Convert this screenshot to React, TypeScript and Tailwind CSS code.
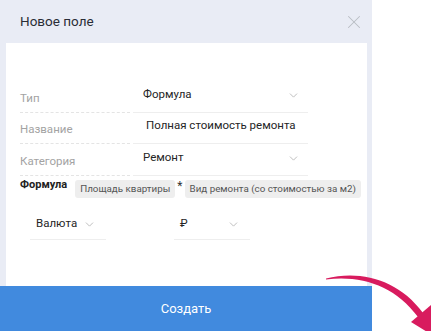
import { ChevronDown, X } from "lucide-react";

type FieldRowProps = {
  label: string;
  value: string;
  select?: boolean;
  valueIndent?: string;
};

function FieldRow({ label, value, select = false, valueIndent = "pl-[10px]" }: FieldRowProps) {
  return (
    <div className="flex h-[32px] items-end whitespace-nowrap">
      <div className="w-[110px] shrink-0 border-b border-dashed border-[#e4e4e4] pb-[5px] text-[11.5px] text-[#a3a3a3]">
        {label}
      </div>
      <div
        className={`ml-[3px] flex w-[175px] shrink-0 items-center justify-between border-b border-[#eeeeee] pb-[9px] pr-[8px] text-[11.5px] text-[#252525] ${valueIndent}`}
      >
        <span>{value}</span>
        {select ? <ChevronDown className="mt-[3px] h-[13px] w-[13px] text-[#b5b5b5]" strokeWidth={1.6} /> : null}
      </div>
    </div>
  );
}

function SmallSelect({ value }: { value: string }) {
  return (
    <div className="flex w-[76px] shrink-0 items-center justify-between whitespace-nowrap border-b border-[#eeeeee] pb-[7px] pl-[6px] pr-[10px] text-[11.5px] text-[#252525]">
      <span>{value}</span>
      <ChevronDown className="mt-[2px] h-[13px] w-[13px] text-[#b5b5b5]" strokeWidth={1.6} />
    </div>
  );
}

function Chip({ children }: { children: string }) {
  return (
    <span className="shrink-0 whitespace-nowrap rounded-[3px] bg-[#eeeeee] px-[5px] py-[2px] text-[9.8px] leading-[14px] text-[#555555]">
      {children}
    </span>
  );
}

export default function App() {
  return (
    <div className="relative flex h-[331px] w-[431px] overflow-hidden bg-white font-['Roboto',sans-serif]">
      <div className="flex w-[372px] flex-col bg-[#e9ecf5]">
        <div className="flex h-[43px] items-center justify-between pl-[20px] pr-[7px]">
          <span className="text-[13.5px] text-[#2a2d36]">Новое поле</span>
          <X className="h-[22px] w-[22px] text-[#b9bcc4]" strokeWidth={1.1} />
        </div>

        <div className="ml-[6px] mr-[5px] flex flex-1 flex-col bg-white pl-[14px] pt-[38px]">
          <FieldRow label="Тип" value="Формула" select />
          <div className="-mt-[1px]">
            <FieldRow label="Название" value="Полная стоимость ремонта" valueIndent="pl-[13px]" />
          </div>
          <FieldRow label="Категория" value="Ремонт" select />

          <div className="mt-[1px] flex items-start gap-[8px] whitespace-nowrap">
            <span className="text-[11px] font-bold text-[#222222]">Формула</span>
            <div className="mt-[3px] flex items-start gap-[2px]">
              <Chip>Площадь квартиры</Chip>
              <span className="text-[12px] leading-[12px] text-[#333333]">*</span>
              <Chip>Вид ремонта (со стоимостью за м2)</Chip>
            </div>
          </div>

          <div className="mt-[17px] flex gap-[68px] pl-[10px]">
            <SmallSelect value="Валюта" />
            <SmallSelect value="₽" />
          </div>
        </div>

        <button
          type="button"
          className="h-[45px] w-full bg-[#418ade] text-[13px] text-white"
        >
          Создать
        </button>
      </div>

      <svg
        className="absolute left-0 top-0"
        width="431"
        height="331"
        viewBox="0 0 431 331"
        fill="none"
      >
        <path
          d="M326 278.5 C 360 270, 398 279, 423 313 L 418 317 C 395 286, 362 275, 326 279.5 Z"
          fill="#d81b5e"
        />
        <path d="M411 322 L431 305 L437 338 Z" fill="#d81b5e" />
      </svg>
    </div>
  );
}
